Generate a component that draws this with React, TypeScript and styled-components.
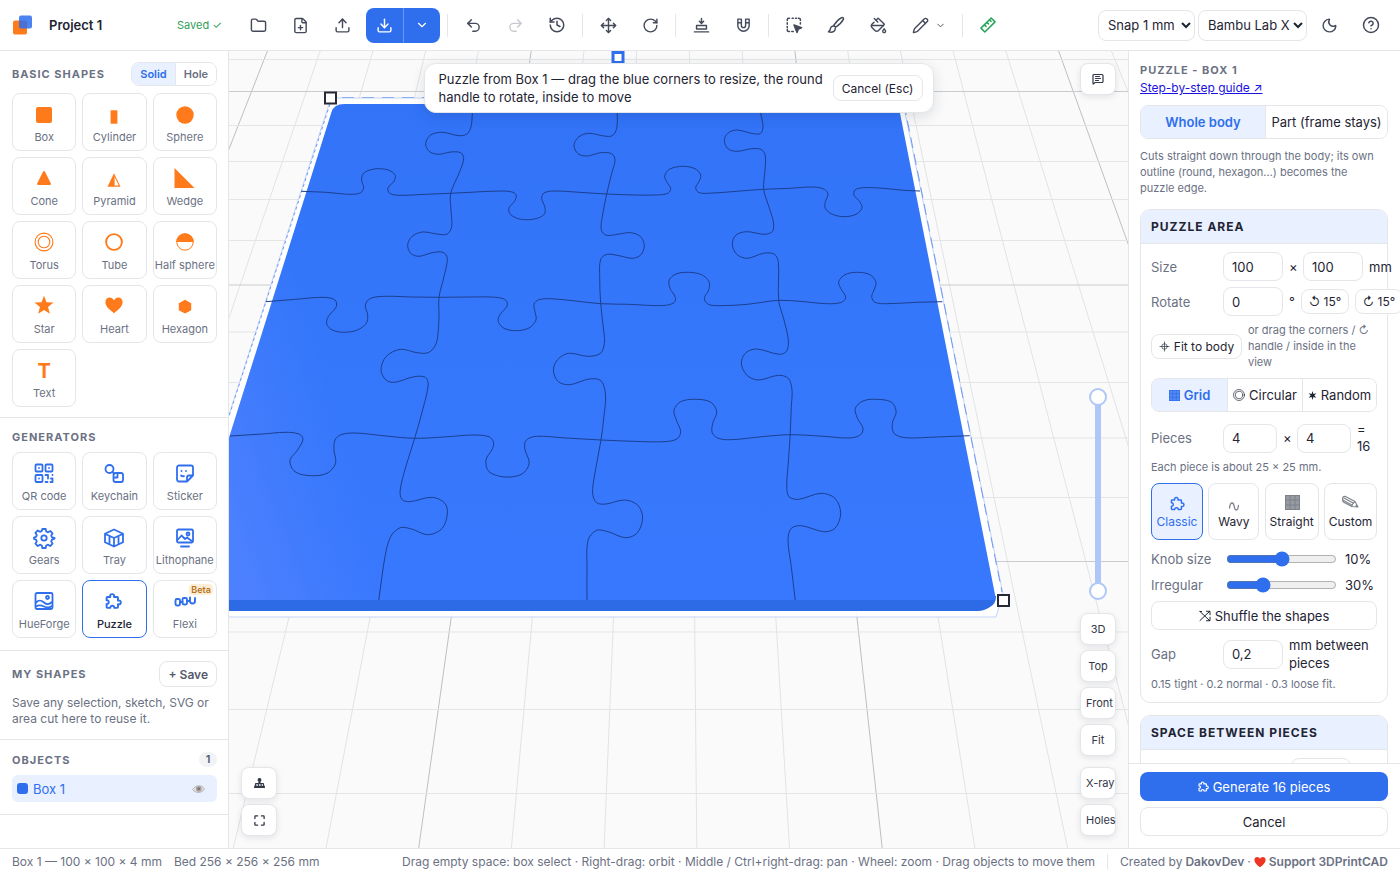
import React, { useState } from 'react';
import styled, { createGlobalStyle, css } from 'styled-components';
import {
  Folder, FilePlus, Upload, Download, ChevronDown, Undo2, Redo2, History, Move, RotateCw,
  PaintBucket, Pencil, Moon, CircleHelp, MessageSquareText,
} from 'lucide-react';

const c = {
  blue: '#2f6fed',
  tint: '#e9f0ff',
  ink: '#1f2433',
  mute: '#6b7183',
  line: '#e4e6ea',
  orange: '#ff7a1a',
};

const GlobalStyle = createGlobalStyle`
  *, *::before, *::after { box-sizing: border-box; }
  body { margin: 0; background: #fff; color: ${c.ink}; }
  body, button, input, select { font-family: Inter, "Liberation Sans", sans-serif; font-size: 13px; }
  button, input, select { color: inherit; margin: 0; }
  h1, h2, p { margin: 0; }
  svg { display: block; flex: none; }
`;

const Shell = styled.div`
  height: 100vh;
  min-height: 600px;
  display: grid;
  grid-template-rows: 51px minmax(0, 1fr) 27px;
`;

/* ---------- top bar ---------- */

const TopBar = styled.header`
  display: flex;
  align-items: center;
  gap: 6px;
  padding: 0 11px 0 12px;
  border-bottom: 1px solid ${c.line};
`;
const Brand = styled.div`
  display: flex;
  align-items: center;
  width: 210px;
  margin-right: 12px;
`;
const NameInput = styled.input`
  flex: 1;
  min-width: 0;
  margin-left: 10px;
  padding: 4px 6px;
  border: 0;
  background: none;
  font-weight: 600;
`;
const Saved = styled.span`
  font-size: 11px;
  color: #2f9e57;
  white-space: nowrap;
`;
const IconButton = styled.button<{ $wide?: boolean; $tone?: string }>`
  width: ${p => (p.$wide ? 53 : 36)}px;
  height: 36px;
  display: flex;
  align-items: center;
  justify-content: center;
  gap: 6px;
  padding: 0;
  border: 0;
  border-radius: 8px;
  background: none;
  color: ${p => p.$tone || '#444a5a'};
`;
const Separator = styled.span`
  width: 1px;
  height: 23px;
  margin: 0 1px;
  background: ${c.line};
`;
const SplitButton = styled.div`
  display: flex;
  height: 35px;
  border-radius: 8px;
  overflow: hidden;
  background: ${c.blue};
  button {
    width: 37px;
    display: flex;
    align-items: center;
    justify-content: center;
    padding: 0;
    border: 0;
    background: none;
    color: #fff;
  }
  button + button { border-left: 1px solid #6b98f3; }
`;
const TopRight = styled.div`
  display: flex;
  align-items: center;
  gap: 4px;
  margin-left: auto;
`;
const Pair = styled.div<{ $gap: number }>`
  display: flex;
  gap: ${p => p.$gap}px;
`;
const Picker = styled.select<{ $w: number }>`
  width: ${p => p.$w}px;
  height: 31px;
  padding: 0 0 0 5px;
  border: 1px solid ${c.line};
  border-radius: 8px;
  background: #fff;
`;

/* ---------- columns ---------- */

const Body = styled.div`
  display: grid;
  grid-template-columns: 229px minmax(0, 1fr) 272px;
  min-height: 0;
`;
const Sidebar = styled.aside`
  border-right: 1px solid ${c.line};
  overflow: hidden auto;
  scrollbar-width: none;
`;
const Section = styled.section<{ $top?: number; $bottom?: number }>`
  padding: ${p => p.$top ?? 12}px 11px ${p => p.$bottom ?? 12}px 12px;
  border-bottom: 1px solid ${c.line};
`;
const SectionHead = styled.div<{ $h: number; $gap?: number }>`
  display: flex;
  align-items: center;
  justify-content: space-between;
  height: ${p => p.$h}px;
  margin-bottom: ${p => p.$gap ?? 8}px;
`;
const Heading = styled.h2`
  font-size: 11px;
  line-height: 14px;
  font-weight: 700;
  letter-spacing: 1px;
  color: ${c.mute};
`;
const Segmented = styled.div<{ $h: number; $cols: string }>`
  display: grid;
  grid-template-columns: ${p => p.$cols};
  height: ${p => p.$h}px;
  border: 1px solid ${c.line};
  border-radius: 8px;
  overflow: hidden;
`;
const Segment = styled.button<{ $on?: boolean; $small?: boolean }>`
  display: flex;
  align-items: center;
  justify-content: center;
  gap: 4px;
  padding: 0;
  border: 0;
  white-space: nowrap;
  background: ${p => (p.$on ? c.tint : '#fff')};
  color: ${p => (p.$on ? c.blue : p.$small ? c.mute : c.ink)};
  font-size: ${p => (p.$small ? 11 : 13)}px;
  font-weight: ${p => (p.$on || p.$small ? 600 : 400)};
  & + & { border-left: 1px solid ${c.line}; }
`;
const Tiles = styled.div`
  display: grid;
  grid-template-columns: repeat(3, minmax(0, 1fr));
  gap: 6px;
`;
const Tile = styled.button<{ $on?: boolean; $tone: string }>`
  position: relative;
  height: 58px;
  display: flex;
  flex-direction: column;
  align-items: center;
  gap: 3px;
  padding: 9px 0 0;
  border: 1px solid ${p => (p.$on ? c.blue : c.line)};
  border-radius: 8px;
  background: #fff;
  color: ${p => (p.$on ? c.ink : c.mute)};
  font-size: 11px;
  line-height: 14px;
  font-weight: ${p => (p.$on ? 500 : 400)};
  white-space: nowrap;
  svg, b { color: ${p => p.$tone}; }
  b { font-size: 20px; line-height: 24px; font-weight: 700; }
`;
const Beta = styled.span`
  position: absolute;
  top: 3px;
  right: 3px;
  padding: 0 2px;
  border-radius: 4px;
  background: #fdeed8;
  color: #b8741a;
  font-size: 9px;
  line-height: 11px;
  font-weight: 600;
`;
const SmallButton = styled.button<{ $h: number; $w?: number; $bold?: boolean; $size?: number }>`
  flex: none;
  height: ${p => p.$h}px;
  ${p => p.$w && css`width: ${p.$w}px;`}
  display: flex;
  align-items: center;
  justify-content: center;
  gap: 4px;
  padding: 0 8px;
  border: 1px solid ${c.line};
  border-radius: 8px;
  background: #fff;
  color: ${p => (p.$bold ? '#555b6c' : c.ink)};
  font-size: ${p => p.$size ?? 12}px;
  font-weight: ${p => (p.$bold ? 600 : 400)};
  white-space: nowrap;
`;
const Note = styled.p<{ $size?: number }>`
  font-size: ${p => p.$size ?? 11}px;
  line-height: 16px;
  color: ${c.mute};
`;
const Count = styled.span`
  min-width: 18px;
  padding: 0 6px;
  border-radius: 8px;
  background: #f2f3f6;
  font-size: 11px;
  line-height: 15px;
  font-weight: 600;
  color: #555b6c;
  text-align: center;
`;
const ObjectRow = styled.div`
  display: flex;
  align-items: center;
  gap: 5px;
  height: 27px;
  padding: 0 12px 0 5px;
  border-radius: 6px;
  background: ${c.tint};
  color: ${c.blue};
  span:nth-child(2) { flex: 1; }
`;
const Swatch = styled.span`
  width: 11px;
  height: 11px;
  border-radius: 3px;
  background: ${c.blue};
`;
const BareButton = styled.button`
  padding: 0;
  border: 0;
  background: none;
`;

/* ---------- viewport ---------- */

const Viewport = styled.main`
  position: relative;
  overflow: hidden;
  background: #fafafa;
`;
const Scene = styled.svg`
  position: absolute;
  inset: 0;
  width: 100%;
  height: 100%;
`;
const Banner = styled.div`
  position: absolute;
  top: 12px;
  left: 12px;
  right: 12px;
  max-width: 510px;
  margin: 0 auto;
  display: flex;
  align-items: center;
  gap: 4px;
  padding: 6px 10px 6px 14px;
  border: 1px solid ${c.line};
  border-radius: 12px;
  background: #fff;
  box-shadow: 0 4px 14px rgba(20, 30, 60, 0.12);
  line-height: 18px;
  p { flex: 1; }
`;
const Stack = styled.div<{ $side: 'left' | 'right'; $edge: 'top' | 'bottom' }>`
  position: absolute;
  ${p => p.$side}: 12px;
  ${p => p.$edge}: 12px;
  display: flex;
  flex-direction: column;
  align-items: center;
  gap: 5px;
`;
const ViewButton = styled.button<{ $apart?: boolean }>`
  width: 36px;
  height: 32px;
  margin-top: ${p => (p.$apart ? 6 : 0)}px;
  padding: 0 5px;
  border: 1px solid ${c.line};
  border-radius: 8px;
  background: #fff;
  box-shadow: 0 2px 6px rgba(20, 30, 60, 0.1);
  color: #333848;
  font-size: 11px;
  white-space: nowrap;
  svg { margin: 0 auto; }
`;
const HeightRange = styled.div`
  position: relative;
  width: 18px;
  height: 212px;
  margin-bottom: 8px;
  &::before {
    content: '';
    position: absolute;
    inset: 9px 6px;
    background: #aec7f7;
  }
  input {
    position: absolute;
    inset: 0;
    width: 18px;
    height: 212px;
    appearance: none;
    background: none;
    writing-mode: vertical-lr;
    direction: rtl;
    pointer-events: none;
  }
  input::-webkit-slider-thumb {
    appearance: none;
    width: 18px;
    height: 18px;
    border: 2px solid #aec7f7;
    border-radius: 50%;
    background: #fff;
    pointer-events: auto;
  }
`;

/* ---------- right panel ---------- */

const Panel = styled.aside`
  display: flex;
  flex-direction: column;
  min-height: 0;
  border-left: 1px solid ${c.line};
`;
const PanelScroll = styled.div`
  flex: 1;
  min-height: 0;
  padding: 12px 12px 0 11px;
  overflow: hidden auto;
  scrollbar-width: none;
`;
const Guide = styled.a`
  display: block;
  margin: 3px 0 9px;
  font-size: 12px;
  line-height: 16px;
  color: #1a10e0;
`;
const Intro = styled(Note)`
  margin: 9px 0 13px;
  padding-right: 6px;
`;
const Group = styled.section`
  margin-bottom: 12px;
  border: 1px solid ${c.line};
  border-radius: 10px;
`;
const GroupHead = styled.h2`
  height: 34px;
  padding: 0 10px;
  border-bottom: 1px solid ${c.line};
  border-radius: 9px 9px 0 0;
  background: ${c.tint};
  font-size: 12px;
  line-height: 33px;
  font-weight: 700;
  letter-spacing: 1px;
`;
const GroupBody = styled.div`
  display: flex;
  flex-direction: column;
  gap: 6px;
  padding: 8px 10px 10px;
`;
const Row = styled.div<{ $h?: number }>`
  display: flex;
  align-items: center;
  gap: 6px;
  min-height: ${p => p.$h ?? 29}px;
`;
const InsetRow = styled(Row)`
  padding-left: 140px;
`;
const Label = styled.label`
  flex: none;
  width: 66px;
  color: ${c.mute};
`;
const Unit = styled.span<{ $w?: number; $lh?: number }>`
  flex: none;
  ${p => p.$w && css`width: ${p.$w}px;`}
  line-height: ${p => p.$lh ?? 16}px;
  text-align: ${p => (p.$w === 8 ? 'center' : 'left')};
`;
const Field = styled.input<{ $w: number }>`
  flex: none;
  width: ${p => p.$w}px;
  height: 29px;
  padding: 0 8px;
  border: 1px solid ${c.line};
  border-radius: 8px;
  background: #fff;
`;
const Block = styled.div`
  margin: 2px 0 3px;
`;
const PieceNote = styled(Note)`
  margin-top: -2px;
`;
const Styles = styled.div`
  display: grid;
  grid-template-columns: 52px 51px 54px 53px;
  justify-content: space-between;
`;
const StyleCard = styled.button<{ $on?: boolean }>`
  height: 57px;
  display: flex;
  flex-direction: column;
  align-items: center;
  gap: 1px;
  padding: 9px 0 0;
  border: 1px solid ${p => (p.$on ? c.blue : c.line)};
  border-radius: 8px;
  background: ${p => (p.$on ? c.tint : '#fff')};
  color: ${p => (p.$on ? c.blue : c.ink)};
  font-size: 12px;
  line-height: 16px;
  svg { color: ${p => (p.$on ? c.blue : '#7d8189')}; }
`;
const Range = styled.input`
  width: 111px;
  height: 16px;
  margin: 0 2px 0 3px;
  accent-color: ${c.blue};
`;
const PanelFoot = styled.div`
  display: flex;
  flex-direction: column;
  gap: 6px;
  padding: 8px 12px 12px 11px;
  border-top: 1px solid ${c.line};
`;
const Primary = styled.button`
  display: flex;
  align-items: center;
  justify-content: center;
  gap: 4px;
  height: 29px;
  padding: 0;
  border: 0;
  border-radius: 8px;
  background: ${c.blue};
  color: #fff;
`;

/* ---------- status bar ---------- */

const StatusBar = styled.footer`
  display: flex;
  align-items: center;
  gap: 12px;
  padding: 0 12px;
  border-top: 1px solid ${c.line};
  color: ${c.mute};
  font-size: 12px;
  line-height: 16px;
  white-space: nowrap;
`;
const Tips = styled.span`
  margin-left: auto;
`;
const Credits = styled.span`
  display: flex;
  align-items: center;
  gap: 3px;
  padding-left: 12px;
  border-left: 1px solid ${c.line};
  a { color: inherit; font-weight: 600; text-decoration: none; }
`;

/* ---------- icons ---------- */

const Solid = ({ children, size = 24 }: { children: React.ReactNode; size?: number }) => (
  <svg width={size} height={size} viewBox="0 0 24 24" fill="currentColor" aria-hidden="true">{children}</svg>
);
const Line = ({ children, size = 18, w = 2, box = 24 }: { children: React.ReactNode; size?: number; w?: number; box?: number }) => (
  <svg width={size} height={size} viewBox={`0 0 ${box} ${box}`} fill="none" stroke="currentColor" strokeWidth={w}
    strokeLinecap="round" strokeLinejoin="round" aria-hidden="true">{children}</svg>
);

const Logo = () => (
  <svg width="21" height="21" viewBox="0 0 21 21" aria-hidden="true">
    <rect x="1" y="5.5" width="14" height="14" rx="2" fill="#ff7a1a" />
    <rect x="7" y="0.5" width="13" height="13" rx="2" fill="#2f6fed" fillOpacity="0.86" />
  </svg>
);

/* Jigsaw piece: knobs on the top and right, sockets on the left and bottom. */
const PieceGlyph = ({ size, w = 2.2 }: { size: number; w?: number }) => (
  <svg width={size} height={size} viewBox="2 1 21 21" fill="none" stroke="currentColor" strokeWidth={w} strokeLinejoin="round" aria-hidden="true">
    <path d="M5 6.500h3.500Q7.800 3 10.800 3t2.300 3.500H17q1 0 1 1v3.500q3.500-.7 3.500 2.300t-3.500 2.200V19q0 1-1 1h-3.600q.4-2.600-2.300-2.600T8.600 20H5q-1 0-1-1v-3.800q2.600.2 2.600-2.300T4 10.500v-3q0-1 1-1z" />
  </svg>
);

const shapes: [string, React.ReactNode][] = [
  ['Box', <Solid><rect x="4" y="4" width="16" height="16" rx="2" /></Solid>],
  ['Cylinder', <Solid><rect x="8.6" y="7.3" width="6.8" height="13.4" /></Solid>],
  ['Sphere', <Solid><circle cx="12" cy="12" r="8.7" /></Solid>],
  ['Cone', <Solid><path d="M11.1 4.6q.9-1.2 1.8 0l6 11.8q.5 1.4-1 1.6H6.1q-1.5-.2-1-1.6z" /></Solid>],
  ['Pyramid', <Solid><path fillRule="evenodd" d="M12 6.3 18.5 19.700H5.500zM12.600 9.800V18.500H16.700z" /></Solid>],
  ['Wedge', <Solid><path d="M1.500 1v20H21.500z" /></Solid>],
  ['Torus', <Line size={24} w={1.1}><circle cx="12" cy="11" r="8.9" /><circle cx="12" cy="11" r="5.8" /></Line>],
  ['Tube', <Line size={24} w={1.9}><circle cx="12" cy="11" r="7.9" /></Line>],
  ['Half sphere', <Solid><path d="M3.300 11a8.700 8.700 0 0 1 17.400 0z" /><circle cx="12" cy="11" r="8.200" fill="none" stroke="currentColor" /></Solid>],
  ['Star', <Solid><path d="M12 .8l2.500 6.500 7 .3-5.500 4.400 1.900 6.800-5.900-3.900-5.900 3.900 1.900-6.800L2.500 7.600l7-.3z" /></Solid>],
  ['Heart', <Solid><path d="M12 18.300C7.500 14.700 3.400 11.500 3.400 7.100 3.400 4.200 5.300 2.500 7.600 2.500c2 0 3.500 1.200 4.400 3 .9-1.800 2.400-3 4.400-3 2.300 0 4.200 1.700 4.200 4.600 0 4.400-4.100 7.600-8.600 11.200z" /></Solid>],
  ['Hexagon', <Solid><path d="M12 4.800l6.200 3.400v7L12 18.600l-6.200-3.400v-7z" /></Solid>],
  ['Text', <b>T</b>],
];

const generators: [string, React.ReactNode][] = [
  ['QR code', (
    <Line size={24} w={1.8}>
      <rect x="3.5" y="2.5" width="7" height="7" rx="1" /><rect x="13.5" y="2.5" width="7" height="7" rx="1" />
      <rect x="3.5" y="13" width="7" height="7" rx="1" />
      <path d="M7 6h.01M17 6h.01M7 16.500h.01M13.500 13h2.500v3.500M20.500 13v.01M13.500 20h2M19 16.500h1.500V20H18.500" />
    </Line>
  )],
  ['Keychain', (
    <Line size={24} w={1.8}>
      <circle cx="7.500" cy="7" r="4" /><rect x="11.500" y="11" width="9.500" height="9" rx="2" />
      <path d="M10.300 9.800l2 2M12 15.500h3.500V11" />
    </Line>
  )],
  ['Sticker', (
    <Line size={24} w={1.8}>
      <path d="M6 3.500h12a2 2 0 0 1 2 2v8l-6 6H6a2 2 0 0 1-2-2v-12a2 2 0 0 1 2-2zM20 13.500h-4a2 2 0 0 0-2 2v4M8.500 9h.01M13 9h.01M8 13.500c1 .8 2 .9 3 .6" />
    </Line>
  )],
  ['Gears', (
    <Line size={24} w={1.8}>
      <path d="M10.300 3h3.400l.5 2.500 1.900.8 2.100-1.400 2.400 2.400-1.400 2.100.8 1.900 2.500.5v.9l-2.500 1-.8 1.900 1.400 2.100-2.400 2.400-2.100-1.400-1.900.8-.5 2.500h-3.400l-.5-2.500-1.900-.8-2.100 1.400-2.400-2.400 1.400-2.100-.8-1.900-2-.7v-1.500l2-.7.8-1.900-1.400-2.100 2.400-2.400 2.100 1.400 1.900-.8z" />
      <circle cx="12" cy="12" r="2.7" />
    </Line>
  )],
  ['Tray', (
    <Line size={24} w={1.8}>
      <path d="M12 3.500l9 4.300v8.400l-9 4.300-9-4.300V7.800zM3 7.800l9 4.200 9-4.200M12 12v8.500M7.500 10.500v7M16.500 10.500v7" />
    </Line>
  )],
  ['Lithophane', (
    <Line size={24} w={1.8}>
      <rect x="4" y="3.5" width="16" height="13" rx="1.5" />
      <path d="M4.500 14l4-4.500 3.500 3.500 2-1.500 5.500 4M8 20.500h8" /><circle cx="15" cy="8" r="1.5" />
    </Line>
  )],
  ['HueForge', (
    <Line size={24} w={1.8}>
      <rect x="3.5" y="3" width="17" height="16" rx="1.5" />
      <path d="M4 12.500c3-3 5-2.500 8 0s6 1.500 8-.5M4 16.500c3-2 5-1.500 8 0s6 1 8-.5" /><circle cx="15.500" cy="7.500" r="1.500" />
    </Line>
  )],
  ['Puzzle', <svg width="24" height="24" viewBox="0 0 24 24" aria-hidden="true"><svg x="3" y="2.5" width="17" height="17"><PieceGlyph size={17} w={2.4} /></svg></svg>],
  ['Flexi', (
    <Line size={24} w={1.9}>
      <rect x="2.500" y="9" width="4.500" height="6.500" rx="1.500" /><rect x="9.500" y="8" width="4.500" height="6.500" rx="1.500" />
      <path d="M7 12h2.500M14 11h2.500M17 7.500V11a2.500 2.500 0 0 0 5 0V8" />
    </Line>
  )],
];

const LayFlat = () => (
  <Line size={17}><path d="M2 21h20M5 12h14v5H5zM12 2v7M9 6l3 3 3-3" /></Line>
);
const MagnetIcon = () => (
  <Line size={17}><path d="M4 3h5v9a3 3 0 0 0 6 0V3h5v9a8 8 0 0 1-16 0zM4 8h5M15 8h5" /></Line>
);
const AreaSelect = () => (
  <Line size={18}>
    <path d="M3 6V5a2 2 0 0 1 2-2h1M9.500 3H11M14 3h1.500M18 3h.5a2 2 0 0 1 2 2v1M20.500 9v1.500M3 9v2M3 14v1.500M3 18v.5a2 2 0 0 0 2 2h1M9 20.500h2" />
    <path d="M12 12l10 3.700-4.200 1.800L16 22z" fill="currentColor" />
  </Line>
);
const BrushIcon = () => (
  <Line size={18}>
    <path d="M9 12.500C12 8 16 4 19.500 2.200c1.700-.6 2.900.6 2.300 2.300C20 8 16 12 11.500 15zM9 12.500l2.500 2.500M9 13.500a4 4 0 0 0-4.500 3.600c-.2 1.600-1 2.900-2.500 3.900 4.500 1.200 9 .5 9-4.500" />
  </Line>
);
const TapeIcon = () => (
  <Line size={18}>
    <path d="M16.200 2.600l5.200 5.200L7.800 21.400l-5.200-5.200zM13.800 5l2.200 2.200M10.500 8.300l2.200 2.200M7.200 11.600l2.200 2.200" />
  </Line>
);
const TargetGlyph = () => (
  <Line size={11} w={1.4}><circle cx="12" cy="12" r="6" /><path d="M12 2v20M2 12h20" /></Line>
);
const HatchGlyph = ({ size }: { size: number }) => (
  <svg width={size} height={size} viewBox="0 0 15 15" aria-hidden="true">
    <rect width="15" height="15" fill="currentColor" fillOpacity="0.8" />
    <path d="M.5 0v15M14.500 0v15M5 0v15M10 0v15M0 .5h15M0 14.500h15M0 5h15M0 10h15" stroke="currentColor" strokeWidth="1" />
  </svg>
);
const RingsGlyph = () => (
  <Line size={12} w={1.3}><circle cx="12" cy="12" r="11" /><circle cx="12" cy="12" r="7.5" /></Line>
);
const SparkGlyph = () => (
  <Solid size={9}><path d="M12 0l2.400 7.800 8-1.800-5.600 6 5.600 6-8-1.800L12 24l-2.400-7.800-8 1.800 5.600-6-5.600-6 8 1.800z" /></Solid>
);
const WaveGlyph = () => (
  <Line size={20} w={1.3} box={20}><path d="M5.500 15c.4-3.500 1.300-5 2.600-5 2.900 0 1.500 7 4 7 1.300 0 2.100-1.700 2.400-4.500" /></Line>
);
const PencilGlyph = () => (
  <Line size={20} w={1.1} box={20}>
    <path d="M2.600 5.600Q2.600 3.400 5 3.300L15 8.500l3 5.500-6.300-.5L3.300 9Q2.300 7.500 2.600 5.600zM4 5l9.500 5.300M3.200 7.200l9 5M15 8.500q-2.800 1.800-3.300 5M18 14l-2-1.600" />
  </Line>
);
const ShuffleGlyph = () => (
  <Line size={12} w={2}><path d="M2 3l19 18M2 21L21 3M15 2.500h7v7M15 21.500h7v-7M2 3h3" /></Line>
);
const StampGlyph = () => (
  <Solid size={13}><path d="M12 2a3.500 3.500 0 0 1 2 6.400V11h4.500a2 2 0 0 1 2 2v3H22v4.500H2V16h1.500v-3a2 2 0 0 1 2-2H10V8.400A3.500 3.500 0 0 1 12 2zM6 13.500V16h3v-2.500zm5 0V16h3v-2.500zm5 0V16h2.500v-2.500z" /></Solid>
);
const ExpandGlyph = () => (
  <Line size={13} w={2.4}><path d="M3.500 8.500v-4a1 1 0 0 1 1-1h4M15.500 3.500h4a1 1 0 0 1 1 1v4M20.500 15.500v4a1 1 0 0 1-1 1h-4M8.500 20.500h-4a1 1 0 0 1-1-1v-4" /></Line>
);
const EyeGlyph = () => (
  <svg width="13" height="10" viewBox="0 0 13 10" aria-hidden="true">
    <path d="M.5 5.500C3 1.500 9.500 0 12.500 5 10 9.500 3.500 9.500.5 5.500z" fill="#e0dfe2" stroke="#b4b6bd" />
    <circle cx="6.800" cy="4.800" r="2.900" fill="#aaa19c" /><circle cx="6.800" cy="4.800" r="1.300" fill="#77706d" />
  </svg>
);
const HeartGlyph = () => (
  <svg width="12" height="12" viewBox="0 0 12 12" aria-hidden="true">
    <path d="M6 11.200C2.500 8.500.4 6.500.4 3.900.4 2.100 1.700 1 3.200 1 4.500 1 5.500 1.700 6 2.900 6.500 1.700 7.500 1 8.800 1c1.500 0 2.800 1.100 2.800 2.900 0 2.600-2.100 4.600-5.600 7.300z" fill="#ee3524" />
  </svg>
);

/* ---------- scene drawing ---------- */

const seams: number[][] = [
  [301.3,191.3,325.7,192.3,350.7,194.3,360.7,192.7,363.7,187.3,361.7,180.7,363,174,369.7,170,379,168.7,389,170.3,395.3,175.3,393.7,181.7,388,187.7,389.7,193.3,399,195.3,425.7,194.3,450.7,193.3,475.7,192,502.3,191,513,192.3,516.3,195.7,514.3,201.7,509,207.7,509.7,213.3,516.3,218,525.7,219.7,537.3,218.3,544.7,213.7,544.7,206.7,541.7,198.3,544,193,554,191,579,192.3,606.7,194,635.7,195,659,194.9,668.3,193,670.7,188.3,666.7,181.7,664.7,176,669.3,169.3,682.7,166.3,695,168.7,700.7,175,699,181.7,695.7,187.3,698.3,192.3,708.3,193.3,736.7,191.3,763.7,189.3,790,188.3,813.3,187,824.3,189.3,828,194.3,825.3,201.7,825.3,208.3,831.7,214,844,216.7,856,214.3,862,208,859.3,201,854,195.3,855,190,863.3,187.7,883.3,188.3,903.3,190.3,920,191],
  [265.7,301.7,295.7,299.3,324,297.3,335,300,336.3,306.7,328.3,316.7,326.7,324,332.3,330,344,332.3,357.3,330,366.3,323.3,367.7,315,365.3,305,370.7,298.3,385.7,296.3,412.3,297,439,297.3,469,297,495.7,297.3,505.7,300,507,306,499.7,315,498.3,321.7,504,328.3,516.3,330.7,529,328,536,320,535,311.7,534,304,539,299.7,550.7,298.7,575.7,301,600.7,303.7,629,304.3,662.3,305.6,674,302.7,675.3,297.3,670,288.3,669.3,280,676,274,688.3,272.3,701.7,274.7,709,281.7,708.7,290,704.3,298.3,708.3,304.3,720,305.7,746.7,304.4,763.7,302,778.7,300.3,800,301.3,826.7,303.7,841.7,302.3,845.7,297.3,840.7,288.3,838.7,281.7,845,274.7,856.7,272.3,870,274.7,876,282.3,874,290,871.7,296.7,875,302.3,886.7,303.7,916.7,302.3,942.3,301.7],
  [230,436,262.7,434,285,432.3,299,434,303,439.3,297.5,450,290,460.7,295,471.7,310.5,475.7,327,473.3,335.6,463.3,334,450,335,440,341,434.7,355,433,386,436,414.7,438.3,448,436.7,473,435,489,436.7,493.3,441.7,492.7,448.3,486,460,489,471.7,505,477,522,474,529.2,463.3,524.7,448.3,526.4,440,536.5,436.3,565.7,438,601,440,633,441.3,664,441.7,676.8,439,680.7,431.7,676.3,420,674,410,680.7,401.7,694.8,399.3,710.5,402,716.7,411.7,712.7,423.3,712.2,432.7,718.3,438.3,731.2,439.7,762,436.7,790.2,434.7,823.8,436.3,849,438,860.3,435,863,428.3,857.5,418.3,855.3,408.3,863,401,875.5,399.3,891.2,402,896.2,411.7,892.3,423.3,894,433.3,905.2,437.7,936,437,969.7,435.7],
  [472.3,104,472.3,113.3,471,126.7,467,134,459,135.7,442.3,132.3,430.7,135,425.7,143.3,429,151.3,438.3,154.3,450.7,152,460.7,152.7,463.7,158.3,459.7,171.7,450.7,193.3,451,210,451.7,226.7,447.3,234,439,234.3,422.3,232,411.7,236.7,407.7,245,410.7,253.3,419,256.3,432.3,252.7,443,252.3,447.3,258.3,444,276.7,439,297.3,439,316.7,437.7,336.7,435,346,428.2,352.7,417,352.7,400.2,349.3,386,356.7,381,370,386,380,394.5,382.3,414.2,376.7,425.4,377.3,428.2,385,422.6,410,414.7,438.3,405.8,466.7,400.2,490,401.8,499.3,409.7,501.7,432.1,497.3,445,503.3,447.3,514,442.2,528.3,428.2,534.7,411.4,529,400.2,527.7,390.6,536.7,385,556.7,378.8,600],
  [617.3,104,617.3,113.3,616.7,128.3,612.3,135.7,604,136,589,133.3,579,136.7,574,145,578,153.7,587.3,156,600.7,152.7,611.7,153.7,615,160,611.7,173.3,606.7,194,602.3,216.7,601.3,230,606.3,235.3,619,234,630.7,232.7,640.7,236.7,644.3,246,640.7,255,632.3,258.3,619,255.7,607.3,254.3,600.7,259.3,599.7,276.7,600.7,303.7,604,333.3,604.4,343.3,600.5,353.3,588,356.3,568.5,353.3,557.3,360,553.4,370.7,558.4,381.7,569.6,384.7,589.3,379,601,380.7,605.5,395,603.9,416.7,601,440,594.9,473.3,592.6,493.3,596.6,502.7,606,504,624.6,500,637.5,505,642.6,517.3,637.5,532.7,625.7,537.7,607.8,531.7,596.6,530.3,588.1,540,587,566.7,587,600],
  [759,104,760.7,113.3,763,126.7,760.7,133.3,753.3,133.7,736.7,130,727.7,133.3,724.3,140.7,728.3,149,737.3,151.3,751.7,148.7,761.7,149.7,765.3,156,765,170,763.7,189.3,768.3,205,773.3,221.7,772.7,231,765,234.3,746.7,231.7,736,235,732.3,244.3,736.7,254.3,747.3,258.3,763.3,253.3,774,254,778.3,261.7,778.7,300.3,784,320,788.3,340,786.7,351,779.3,354.3,756.7,349,746,352.7,741.3,362.7,746.7,375,758.3,380,778.3,375.3,788.3,378.3,792,390,791.3,406.7,790.2,434.7,788.5,460,786.8,486.7,789,496.7,798.6,499.3,821,493.3,835,498.3,840.7,513.3,835,528.3,823.8,531.7,801.4,525.7,791.3,528.3,788,540,791.3,566.7,795.2,600],
];

/* Catmull-Rom spline through a flat list of x,y pairs. */
function spline(flat: number[]) {
  const n = flat.length / 2;
  const at = (i: number) => {
    const k = Math.max(0, Math.min(n - 1, i));
    return [flat[2 * k], flat[2 * k + 1]];
  };
  let d = `M${flat[0]} ${flat[1]}`;
  for (let i = 0; i < n - 1; i++) {
    const [p0, p1, p2, p3] = [at(i - 1), at(i), at(i + 1), at(i + 2)];
    // Tangents are scaled by the segment length so long runs do not overshoot the knobs.
    const len = Math.hypot(p2[0] - p1[0], p2[1] - p1[1]);
    const tan = (a: number[], m: number[], b: number[]) => {
      const s = Math.hypot(m[0] - a[0], m[1] - a[1]) + Math.hypot(b[0] - m[0], b[1] - m[1]) || 1;
      return [((b[0] - a[0]) / s) * len / 3, ((b[1] - a[1]) / s) * len / 3];
    };
    const t1 = tan(p0, p1, p2);
    const t2 = tan(p1, p2, p3);
    d += `C${p1[0] + t1[0]} ${p1[1] + t1[1]} ${p2[0] - t2[0]} ${p2[1] - t2[1]} ${p2[0]} ${p2[1]}`;
  }
  return d;
}

const gridRows = [59.5, 91.5, 125.5, 161.5, 199.5, 240.5, 285, 332, 382.5, 438, 497.5, 561.5, 632, 709.5, 793.5];
const isMajorRow = (i: number) => i % 5 === 1;
const gridCols = Array.from({ length: 30 }, (_, i) => i - 13);
const slab = 'M344 104H892Q898 104 899 108L995.500 597Q995.500 600 992 600H178L331.500 112Q334 104 344 104z';

const BedScene = () => (
  <Scene viewBox="229 51 899 797" preserveAspectRatio="xMidYMid slice" role="img" aria-label="Puzzle preview on the print bed">
    <defs>
      <linearGradient id="face" x1="0" y1="0" x2="0" y2="1">
        <stop offset="0" stopColor="#3273f8" />
        <stop offset="0.5" stopColor="#3577fb" />
        <stop offset="1" stopColor="#3878fe" />
      </linearGradient>
      <linearGradient id="sheen" gradientUnits="userSpaceOnUse" x1="205" y1="440" x2="335" y2="400">
        <stop offset="0" stopColor="#6a8cff" stopOpacity="0.4" />
        <stop offset="1" stopColor="#5a86ff" stopOpacity="0" />
      </linearGradient>
    </defs>
    {gridCols.map(k => (
      <line key={k} x1={531.3 + 52.7 * k} y1="50" x2={418.7 + 92.7 * k} y2="848"
        stroke={k % 5 === 0 ? '#bcbfc3' : '#e1e3e5'} />
    ))}
    {gridRows.map((y, i) => (
      <line key={y} x1="0" y1={y} x2="1400" y2={y} stroke={isMajorRow(i) ? '#c9cbcf' : '#e3e5e7'} />
    ))}
    <path d="M331 98H902L1003 594 996 617H164z" fill="#fff" fillOpacity="0.9" stroke="#c3d3f8" />
    <path d="M342 97.500H902" stroke="#8eaef2" strokeDasharray="12 8" fill="none" />
    <path d="M330 104L164 617" stroke="#6f98f2" strokeDasharray="3 3" fill="none" />
    <path d="M904 104L1002 592" stroke="#6f98f2" strokeDasharray="11 6" fill="none" />
    <path d="M166 596H996Q996 604 990 607 984 611 978 611H166z" fill="#2d6be6" />
    <path d={slab} fill="url(#face)" />
    <path d={slab} fill="url(#sheen)" />
    <g fill="none" stroke="#1c3f8f" strokeWidth="1">
      {seams.map((s, i) => <path key={i} d={spline(s)} />)}
    </g>
    <g fill="#fff">
      <rect x="325" y="92.5" width="11" height="11" stroke="#262a36" strokeWidth="2" />
      <rect x="998" y="595" width="11" height="11" stroke="#262a36" strokeWidth="2" />
      <rect x="613" y="52.5" width="10" height="10" stroke="#2f6fed" strokeWidth="3" />
    </g>
  </Scene>
);

/* ---------- page ---------- */

export default function App() {
  const [name, setName] = useState('Project 1');
  const [size, setSize] = useState(['100', '100']);
  const [angle, setAngle] = useState('0');
  const [pieces, setPieces] = useState(['4', '4']);
  const [gap, setGap] = useState('0,2');
  const [space, setSpace] = useState('');
  const ic = { size: 17, strokeWidth: 2 };

  return (
    <Shell>
      <GlobalStyle />
      <TopBar>
        <Brand>
          <Logo />
          <NameInput aria-label="Project name" value={name} onChange={e => setName(e.target.value)} />
          <Saved>Saved ✓</Saved>
        </Brand>
        <IconButton aria-label="Open"><Folder {...ic} /></IconButton>
        <IconButton aria-label="New"><FilePlus {...ic} /></IconButton>
        <IconButton aria-label="Import"><Upload {...ic} /></IconButton>
        <SplitButton>
          <button aria-label="Export"><Download {...ic} /></button>
          <button aria-label="Export options"><ChevronDown size={14} /></button>
        </SplitButton>
        <Separator />
        <IconButton aria-label="Undo"><Undo2 {...ic} /></IconButton>
        <IconButton aria-label="Redo" disabled $tone="#c8cad0"><Redo2 {...ic} /></IconButton>
        <IconButton aria-label="History"><History size={18} /></IconButton>
        <Separator />
        <IconButton aria-label="Move"><Move {...ic} /></IconButton>
        <IconButton aria-label="Rotate"><RotateCw {...ic} /></IconButton>
        <Separator />
        <IconButton aria-label="Lay flat"><LayFlat /></IconButton>
        <IconButton aria-label="Magnet"><MagnetIcon /></IconButton>
        <Separator />
        <IconButton aria-label="Select area"><AreaSelect /></IconButton>
        <IconButton aria-label="Paint"><BrushIcon /></IconButton>
        <IconButton aria-label="Fill"><PaintBucket {...ic} /></IconButton>
        <IconButton aria-label="Sketch" $wide><Pencil {...ic} /><ChevronDown size={11} /></IconButton>
        <Separator />
        <IconButton aria-label="Measure" $tone="#25a35a"><TapeIcon /></IconButton>
        <TopRight>
          <Pair $gap={3}>
            <Picker $w={97} aria-label="Snap"><option>Snap 1 mm</option></Picker>
            <Picker $w={109} aria-label="Printer"><option>Bambu Lab X1C</option></Picker>
          </Pair>
          <Pair $gap={6}>
            <IconButton aria-label="Dark theme"><Moon {...ic} /></IconButton>
            <IconButton aria-label="Help"><CircleHelp size={18} /></IconButton>
          </Pair>
        </TopRight>
      </TopBar>

      <Body>
        <Sidebar>
          <Section $top={11} $bottom={10}>
            <SectionHead $h={24} $gap={7}>
              <Heading>BASIC SHAPES</Heading>
              <Segmented $h={24} $cols="43px 41px">
                <Segment $on $small>Solid</Segment>
                <Segment $small>Hole</Segment>
              </Segmented>
            </SectionHead>
            <Tiles>
              {shapes.map(([label, icon]) => <Tile key={label} $tone={c.orange}>{icon}{label}</Tile>)}
            </Tiles>
          </Section>
          <Section>
            <SectionHead $h={14}><Heading>GENERATORS</Heading></SectionHead>
            <Tiles>
              {generators.map(([label, icon]) => (
                <Tile key={label} $tone={c.blue} $on={label === 'Puzzle'}>
                  {icon}{label}{label === 'Flexi' && <Beta>Beta</Beta>}
                </Tile>
              ))}
            </Tiles>
          </Section>
          <Section $top={10}>
            <SectionHead $h={26}>
              <Heading>MY SHAPES</Heading>
              <SmallButton $h={26} $bold>+ Save</SmallButton>
            </SectionHead>
            <Note $size={12}>Save any selection, sketch, SVG or area cut here to reuse it.</Note>
          </Section>
          <Section>
            <SectionHead $h={15}><Heading>OBJECTS</Heading><Count>1</Count></SectionHead>
            <ObjectRow>
              <Swatch /><span>Box 1</span>
              <BareButton aria-label="Hide Box 1"><EyeGlyph /></BareButton>
            </ObjectRow>
          </Section>
        </Sidebar>

        <Viewport>
          <BedScene />
          <Banner>
            <p>Puzzle from Box 1 — drag the blue corners to resize, the round handle to rotate, inside to move</p>
            <SmallButton $h={26}>Cancel (Esc)</SmallButton>
          </Banner>
          <Stack $side="right" $edge="top">
            <ViewButton aria-label="Comments"><MessageSquareText size={12} strokeWidth={2.4} /></ViewButton>
          </Stack>
          <Stack $side="left" $edge="bottom">
            <ViewButton aria-label="Place on bed"><StampGlyph /></ViewButton>
            <ViewButton aria-label="Full screen"><ExpandGlyph /></ViewButton>
          </Stack>
          <Stack $side="right" $edge="bottom">
            <HeightRange>
              <input type="range" aria-label="Upper layer" defaultValue={100} />
              <input type="range" aria-label="Lower layer" defaultValue={0} />
            </HeightRange>
            <ViewButton>3D</ViewButton>
            <ViewButton>Top</ViewButton>
            <ViewButton>Front</ViewButton>
            <ViewButton>Fit</ViewButton>
            <ViewButton $apart>X-ray</ViewButton>
            <ViewButton>Holes</ViewButton>
          </Stack>
        </Viewport>

        <Panel>
          <PanelScroll>
            <Heading>PUZZLE - BOX 1</Heading>
            <Guide href="#guide">Step-by-step guide ↗</Guide>
            <Segmented $h={34} $cols="124px minmax(0, 1fr)">
              <Segment $on>Whole body</Segment>
              <Segment>Part (frame stays)</Segment>
            </Segmented>
            <Intro>Cuts straight down through the body; its own outline (round, hexagon…) becomes the puzzle edge.</Intro>

            <Group>
              <GroupHead>PUZZLE AREA</GroupHead>
              <GroupBody>
                <Row>
                  <Label htmlFor="width">Size</Label>
                  <Field id="width" $w={60} value={size[0]} onChange={e => setSize([e.target.value, size[1]])} />
                  <Unit $w={8}>×</Unit>
                  <Field aria-label="Depth" $w={60} value={size[1]} onChange={e => setSize([size[0], e.target.value])} />
                  <Unit>mm</Unit>
                </Row>
                <Row>
                  <Label htmlFor="angle">Rotate</Label>
                  <Field id="angle" $w={60} value={angle} onChange={e => setAngle(e.target.value)} />
                  <Unit $w={6}>°</Unit>
                  <SmallButton $h={25} $w={48}>↺ 15°</SmallButton>
                  <SmallButton $h={25} $w={48}>↻ 15°</SmallButton>
                </Row>
                <Row>
                  <SmallButton $h={25} $w={91}><TargetGlyph />Fit to body</SmallButton>
                  <Note>or drag the corners / ↻ handle / inside in the view</Note>
                </Row>
                <Block>
                  <Segmented $h={34} $cols="75px 75px minmax(0, 1fr)">
                    <Segment $on><HatchGlyph size={11} />Grid</Segment>
                    <Segment><RingsGlyph />Circular</Segment>
                    <Segment><SparkGlyph />Random</Segment>
                  </Segmented>
                </Block>
                <Row $h={34}>
                  <Label htmlFor="cols">Pieces</Label>
                  <Field id="cols" $w={54} value={pieces[0]} onChange={e => setPieces([e.target.value, pieces[1]])} />
                  <Unit $w={8}>×</Unit>
                  <Field aria-label="Rows" $w={54} value={pieces[1]} onChange={e => setPieces([pieces[0], e.target.value])} />
                  <Unit $w={16}>= 16</Unit>
                </Row>
                <PieceNote>Each piece is about 25 × 25 mm.</PieceNote>
                <Block>
                  <Styles>
                    <StyleCard $on>
                      <svg width="20" height="20" viewBox="0 0 20 20" aria-hidden="true"><svg x="3" y="3" width="15" height="15"><PieceGlyph size={15} w={2} /></svg></svg>
                      Classic
                    </StyleCard>
                    <StyleCard><WaveGlyph />Wavy</StyleCard>
                    <StyleCard>
                      <svg width="20" height="20" viewBox="0 0 20 20" aria-hidden="true"><svg x="3" y="2" width="15" height="15"><HatchGlyph size={15} /></svg></svg>
                      Straight
                    </StyleCard>
                    <StyleCard><PencilGlyph />Custom</StyleCard>
                  </Styles>
                </Block>
                <Row $h={20}>
                  <Label htmlFor="knob">Knob size</Label>
                  <Range id="knob" type="range" min={0} max={100} defaultValue={50} />
                  <Unit>10%</Unit>
                </Row>
                <Row $h={20}>
                  <Label htmlFor="irregular">Irregular</Label>
                  <Range id="irregular" type="range" min={0} max={100} defaultValue={30} />
                  <Unit>30%</Unit>
                </Row>
                <SmallButton $h={29} $size={13}><ShuffleGlyph />Shuffle the shapes</SmallButton>
                <Row>
                  <Label htmlFor="gap">Gap</Label>
                  <Field id="gap" $w={60} value={gap} onChange={e => setGap(e.target.value)} />
                  <Unit $w={82} $lh={18}>mm between pieces</Unit>
                </Row>
                <PieceNote>0.15 tight · 0.2 normal · 0.3 loose fit.</PieceNote>
              </GroupBody>
            </Group>

            <Group>
              <GroupHead>SPACE BETWEEN PIECES</GroupHead>
              <GroupBody>
                <InsetRow>
                  <Field aria-label="Distance" $w={60} value={space} onChange={e => setSpace(e.target.value)} />
                </InsetRow>
              </GroupBody>
            </Group>
          </PanelScroll>
          <PanelFoot>
            <Primary><PieceGlyph size={11} w={2.2} />Generate 16 pieces</Primary>
            <SmallButton $h={29} $size={13}>Cancel</SmallButton>
          </PanelFoot>
        </Panel>
      </Body>

      <StatusBar>
        <span>Box 1 — 100 × 100 × 4 mm</span>
        <span>Bed 256 × 256 × 256 mm</span>
        <Tips>Drag empty space: box select · Right-drag: orbit · Middle / Ctrl+right-drag: pan · Wheel: zoom · Drag objects to move them</Tips>
        <Credits>Created by <a href="#dakovdev">DakovDev</a> · <HeartGlyph /> <a href="#support">Support 3DPrintCAD</a></Credits>
      </StatusBar>
    </Shell>
  );
}
